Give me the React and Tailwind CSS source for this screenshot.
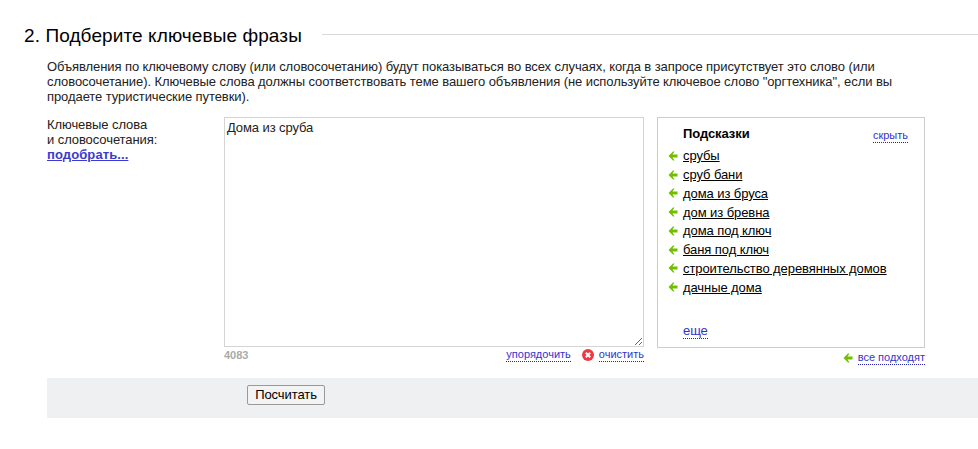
import React from 'react'

const hints = [
  'срубы',
  'сруб бани',
  'дома из бруса',
  'дом из бревна',
  'дома под ключ',
  'баня под ключ',
  'строительство деревянных домов',
  'дачные дома',
]

function GreenArrow() {
  return (
    <svg width="10" height="10" viewBox="0 0 10 10" className="shrink-0">
      <path d="M5 0.5 L0.5 5 L5 9.5 L6.5 9.5 L4.5 6.5 H9.5 V3.5 H4.5 L6.5 0.5 Z" fill="#72bf00" />
    </svg>
  )
}

function ClearIcon() {
  return (
    <svg width="12" height="12" viewBox="0 0 12 12" className="shrink-0">
      <circle cx="6" cy="6" r="6" fill="#f0393f" />
      <path d="M3.8 3.8 L8.2 8.2 M8.2 3.8 L3.8 8.2" stroke="#fff" strokeWidth="2" />
    </svg>
  )
}

function DottedLink({ children, className = '' }) {
  return <a className={`text-[#3333cc] border-b border-dotted border-[#2222aa] ${className}`}>{children}</a>
}

export default function App() {
  return (
    <div className="w-[978px] h-[449px] overflow-hidden bg-white text-[13px] leading-[15px] tracking-[-0.08px] text-[#222] font-['Liberation_Sans',Arial,sans-serif]">
      <div className="flex items-center pl-6 pt-[25px]">
        <h2 className="text-[19px] leading-[22px] tracking-[0.1px] text-black whitespace-nowrap">2. Подберите ключевые фразы</h2>
        <div className="flex-1 h-px bg-[#d9d9d9] ml-5 -mt-1" />
      </div>

      <p className="ml-[47px] mt-3 w-[870px]">
        Объявления по ключевому слову (или словосочетанию) будут показываться во всех случаях, когда в запросе присутствует это слово (или словосочетание). Ключевые слова должны соответствовать теме вашего объявления (не используйте ключевое слово "оргтехника", если вы продаете туристические путевки).
      </p>

      <div className="flex mt-[13px] ml-[47px]">
        <div className="w-[177px]">
          <div>Ключевые слова</div>
          <div>и словосочетания:</div>
          <a className="font-bold tracking-[0.1px] text-[#3b3bd0] underline">подобрать...</a>
        </div>

        <div className="w-[420px]">
          <textarea
            className="block w-[420px] h-[230px] border border-[#d4d4d4] px-[2px] py-[2px] text-[13px] leading-[15px] tracking-[-0.09px] text-[#222] outline-none"
            defaultValue="Дома из сруба"
          />
          <div className="flex items-start justify-between text-[11px] leading-[13px] tracking-normal mt-[2px]">
            <span className="text-[#aaa] font-bold">4083</span>
            <div className="flex items-center -mt-[1px]">
              <DottedLink>упорядочить</DottedLink>
              <span className="ml-[11px] mr-[5px]"><ClearIcon /></span>
              <DottedLink>очистить</DottedLink>
            </div>
          </div>
        </div>

        <div className="w-[268px] ml-[13px]">
          <div className="h-[231px] border border-[#cdcdcd] pl-[10px] pt-[8px]">
            <div className="flex justify-between pl-[15px] pr-[16px] h-[15px]">
              <b className="text-black">Подсказки</b>
              <DottedLink className="h-[14px] text-[11px] leading-[13px] tracking-normal mt-[3px]">скрыть</DottedLink>
            </div>
            <ul className="mt-[5.5px]">
              {hints.map(h => (
                <li key={h} className="flex items-center h-[18.75px] gap-[5px]">
                  <GreenArrow />
                  <a className="text-black underline">{h}</a>
                </li>
              ))}
            </ul>
            <div className="pl-[15px] mt-[26.5px]">
              <DottedLink>еще</DottedLink>
            </div>
          </div>
          <div className="flex justify-end items-center mt-[3px] text-[11px] leading-[13px] tracking-normal">
            <GreenArrow />
            <DottedLink className="ml-[5px]">все подходят</DottedLink>
          </div>
        </div>
      </div>

      <div className="ml-[47px] mt-[13px] h-10 bg-[#eff0f2] pl-[200px] pt-[7px]">
        <button className="block w-[78px] h-[20px] border border-[#999] rounded-[2px] bg-[#f3f3f3] text-[13px] leading-[16px] text-black">
          Посчитать
        </button>
      </div>
    </div>
  )
}
